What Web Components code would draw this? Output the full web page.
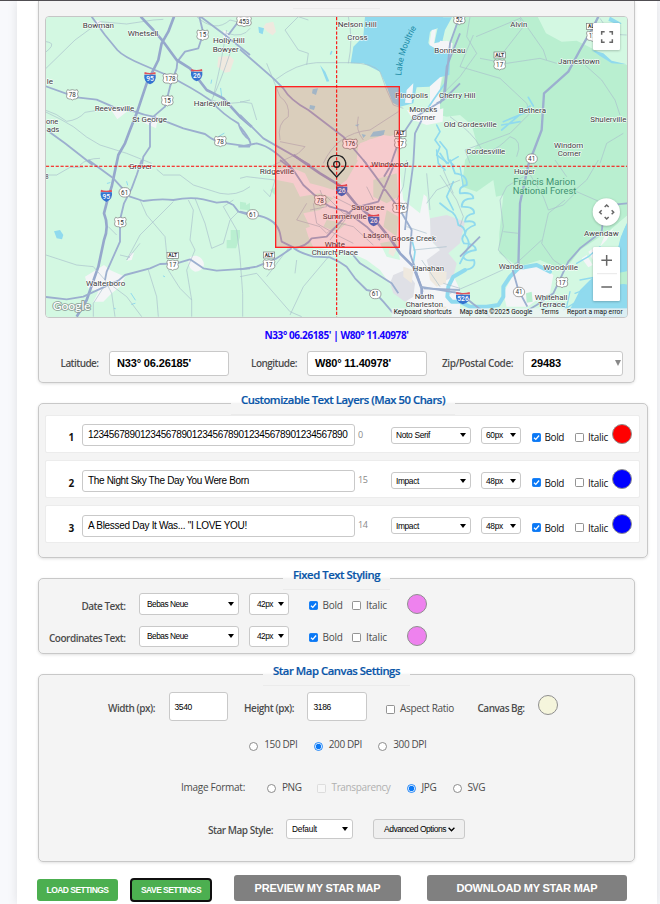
<!DOCTYPE html>
<html lang="en">
<head>
<meta charset="utf-8">
<title>Star Map Settings</title>
<style>
html,body{margin:0;height:904px;overflow:hidden}
body{background:#f8f9fc;font-family:"Open Sans",sans-serif;font-size:10px;color:#4c4c4c}
</style>
</head>
<body>
<star-app></star-app>
<script>
/* Text run whose letter spacing is tuned to fill a given width. */
class FitText extends HTMLElement{
  connectedCallback(){
    const r=this.attachShadow({mode:'open'});
    r.innerHTML=`<style>:host{display:block;flex:none;white-space:pre;width:${this.getAttribute('w')}px;line-height:14px}span{display:inline-block}</style><span></span>`;
    const s=r.querySelector('span');
    s.textContent=this.textContent;
    const w=+this.getAttribute('w'),n=s.textContent.length;
    const nat=s.getBoundingClientRect().width;
    if(nat) s.style.letterSpacing=((w-nat)/n).toFixed(3)+'px';
  }
}
/* White bordered box holding a value. */
class ValueBox extends HTMLElement{
  connectedCallback(){
    const a=n=>this.getAttribute(n);
    this.attachShadow({mode:'open'}).innerHTML=`<style>
    :host{display:flex;flex:none;box-sizing:border-box;align-items:center;width:${a('w')}px;height:${a('h')}px;padding:0 6px 0 ${a('pad')||6}px;background:#fff;border:1px solid #c9c9c9;border-radius:3px;color:#000;font-family:"Liberation Sans",sans-serif;font-size:${a('size')||9}px;justify-content:space-between;overflow:hidden}
    svg{flex:none;display:block;margin-right:${a('arrow')==='grey'?-5:-2}px}
    </style><slot></slot>${a('arrow')?`<svg width="6" height="${a('arrow')==='grey'?6:4}" viewBox="0 0 6 4" preserveAspectRatio="none"><path d="M0 0H6L3 4Z" fill="${a('arrow')==='grey'?'#888':'#000'}"/></svg>`:''}`;
  }
}
class TickBox extends HTMLElement{
  connectedCallback(){
    const on=this.hasAttribute('checked'),radio=this.hasAttribute('radio'),off=this.hasAttribute('disabled');
    const line=on?'#0a78f5':off?'#d8d8d8':'#808080';
    const g=radio
      ?`<circle cx="4.5" cy="4.5" r="4" fill="#fff" stroke="${line}" stroke-width=".9"/>${on?'<circle cx="4.5" cy="4.5" r="2.7" fill="#0a78f5"/>':''}`
      :`<rect x=".45" y=".45" width="8.1" height="8.1" rx="1.2" fill="${on?'#0a78f5':off?'#f7f7f7':'#fff'}" stroke="${line}" stroke-width=".9"/>${on?'<path d="M2 4.7L3.8 6.4L7.1 2.5" fill="none" stroke="#fff" stroke-width="1.3"/>':''}`;
    this.attachShadow({mode:'open'}).innerHTML=`<style>:host{display:block;flex:none;width:9px;height:9px}svg{display:block}</style><svg width="9" height="9">${g}</svg>`;
  }
}
class ColorDot extends HTMLElement{
  connectedCallback(){
    this.attachShadow({mode:'open'}).innerHTML=`<style>:host{display:block;flex:none;box-sizing:border-box;width:20px;height:20px;border:1px solid #8f8f8f;border-radius:50%;background:${this.getAttribute('color')}}</style>`;
  }
}
class PanelBox extends HTMLElement{
  connectedCallback(){
    const a=n=>this.getAttribute(n);
    this.attachShadow({mode:'open'}).innerHTML=`<style>
    :host{display:block}
    fieldset{margin:0;padding:0;box-sizing:border-box;min-width:0;width:${a('w')}px;height:${a('h')}px;border:1.5px solid #c8c8c8;border-radius:5px;background:#f4f4f4;box-shadow:0 1px 3px rgba(0,0,0,.12)}
    legend{box-sizing:border-box;margin:0 auto;padding:1px 10px 0;height:23px;border-bottom:1px solid #ebebeb;color:#0a56a8;font-weight:600;font-size:11.3px;-webkit-text-stroke:.2px #0a56a8}
    </style><fieldset><legend><fit-text w="${a('tw')}">${a('title')}</fit-text></legend><slot></slot></fieldset>`;
  }
}
class FormRow extends HTMLElement{
  connectedCallback(){
    this.attachShadow({mode:'open'}).innerHTML=`<style>:host{display:flex;align-items:center}</style><slot></slot>`;
  }
}
class TextLayer extends HTMLElement{
  connectedCallback(){
    const a=n=>this.getAttribute(n);
    this.attachShadow({mode:'open'}).innerHTML=`<style>
    :host{display:flex;align-items:center;box-sizing:border-box;width:595px;height:38px;padding-top:${a('n')==='1'?2:3}px;background:#fff;border:1px solid #ececec;border-radius:2px;color:#111}
    .n{font-weight:700;margin:4px 7px 0 22.5px}.c{color:#888;font-size:9px;margin:-1px 0 0 3.5px}
    </style>
    <fit-text class="n" w="6">${a('n')}</fit-text>
    <value-box w="273" h="22" size="10" pad="5.5"><fit-text w="${a('tw')}">${a('text')}</fit-text></value-box>
    <fit-text class="c" w="${a('count').length*4.7}">${a('count')}</fit-text>
    <value-box style="margin-left:${33-a('count').length*4.7}px" w="80" h="17" pad="4" size="8.4" arrow="black"><fit-text w="${a('fw')}">${a('font')}</fit-text></value-box>
    <value-box style="margin-left:10px" w="40" h="17" pad="4" size="8.4" arrow="black"><fit-text w="17">${a('size')}</fit-text></value-box>
    <tick-box checked style="margin:4px 0 0 11px"></tick-box><fit-text style="margin:4px 0 0 3.5px" w="19.5">Bold</fit-text>
    <tick-box style="margin:4px 0 0 11.5px"></tick-box><fit-text style="margin:4px 0 0 3.5px" w="20">Italic</fit-text>
    <color-dot style="margin:-3px 0 0 4px" color="${a('color')}"></color-dot>`;
  }
}
class PushButton extends HTMLElement{
  connectedCallback(){
    const a=n=>this.getAttribute(n),k=a('kind');
    this.attachShadow({mode:'open'}).innerHTML=`<style>
    :host{display:flex;flex:none;box-sizing:border-box;align-items:center;justify-content:center;width:${a('w')}px;height:${a('h')}px;border-radius:3px;font:bold ${a('size')}px "Liberation Sans",sans-serif;color:#fff;background:${k==='grey'?'#808080':'#4caf50'};${k==='focus'?'border:2px solid #101010;border-radius:4px':''}}
    </style><slot></slot>`;
  }
}

/* Map drawing. Units are thirds of a pixel; each tile group has its own origin. */
const T={A:[90,0],B:[720,0],C:[1320,0],D:[90,480],E:[720,480],F:[1320,480]};
const labels=[
['A','Bowman',158,252,84],['A','Whetsell',293,385,108],['A','Holly Hill',549,644,128],['A','Bowyer',548,626,156],['A','le',50,69,252],['A','Reevesville',194,313,332],['A','Harleyville',491,602,317],['A','St George',307,411,367],['A','one',48,85,372],['A','ads',50,88,396],
['B','Nelson Hill',293,410,80],['B','Cross',322,383,120],['B','Pinopolis',466,564,294],['B','Moncks',508,592,336],['B','Corner',515,586,360],['B','Windwood',394,505,500],
['C','Alvin',211,262,82],['C','Bonneau',-17,76,159],['C','Jamestown',354,479,192],['C','Cherry Hill',-3,106,293],['C','Bethera',236,318,339],['C','Old Cordesville',11,170,381],['C','Shulerville',451,559,365],['C','Cordesville',79,196,461],['C','Windom',342,430,445],['C','Corner',353,423,469],
['D','Grover',297,367,28],['D','Walterboro',168,286,377],['D','8',46,56,56],
['E','Ridgeville',59,162,43],['E','Sangaree',334,433,150],['E','Summerville',248,380,178],['E','Ladson',370,447,235],['E','White',254,315,262],['E','Church Place',215,354,286],['E','Goose Creek',454,588,244],['E','Hanahan',518,612,332],['E','North',524,582,416],['E','Charleston',497,609,440],
['F','Huger',222,285,43],['F','Awendaw',432,536,228],['F','Wando',176,250,327],['F','Woodville',310,414,331],['F','Whitehall',284,382,419],['F','Terrace',294,376,442]];
const shields=[['A','15',518,105],['A','453',642,64],['A','178',421,236],['A','78',127,284],['A','15',412,302],['A','78',571,424],['B','176',330,432],['B','17',481,430,1],['C','52',58,58],['C','17',179,194,1],['C','17',457,108,1],['C','41',275,476,0,1],['D','61',284,97,0,1],['D','15',271,187],['D','17',428,315,1],['E','61',38,163,0,1],['E','78',241,121],['E','176',480,144],['E','17',87,314,1],['E','61',406,402,0,1],['F','17',366,367],['F','41',237,396,0,1]];
const inter=[['A','95',360,234],['A','26',500,225],['D','95',229,107],['E','26',305,90],['E','26',401,180],['F','526',69,414]];
const g=(t,s)=>`<g transform="translate(${T[t]})">${s}</g>`;
const tx=([t,s,x,x2,y],c='')=>g(t,`<text class="l ${c}" x="${x}" y="${y}" textLength="${x2-x}" lengthAdjust="spacingAndGlyphs">${s}</text>`);
const sh=([t,s,x,y,alt,round])=>{const w=s.length>2?44:35;return g(t,`<g transform="translate(${x} ${y})">${round?`<rect x="-17" y="-14" width="34" height="28" rx="14"/>`:`<path d="M${-w/2+3} -15Q${-w/4} -11 0 -15Q${w/4} -11 ${w/2-3} -15L${w/2} -9Q${w/2-4} -2 ${w/2} 5Q${w/2-1} 13 ${w/2-8} 13Q5 12 0 16Q-5 12 ${-w/2+8} 13Q${-w/2+1} 13 ${-w/2} 5Q${-w/2+4} -2 ${-w/2} -9Z"/>`}<text class="s" y="7">${s}</text>${alt?'<rect x="-17" y="-38" width="34" height="18"/><text class="s" y="-24" style="font-size:15px;font-weight:700">ALT</text>':''}</g>`)};
const it=([t,s,x,y])=>{const w=s.length>2?21:17;return g(t,`<g transform="translate(${x} ${y})"><path d="M${-w} -10H${w}Q${w+3} 11 0 19Q${-w-3} 11 ${-w} -10Z" style="fill:#3473d0;stroke:none"/><path d="M${-w+1} -18Q0 -12 ${w-1} -18L${w} -11H${-w}Z" style="fill:#e0525c;stroke:none"/><text class="s" y="9" style="fill:#fff;font-weight:500;font-size:20px">${s}</text></g>`)};

class StarMap extends HTMLElement{
  connectedCallback(){
    this.attachShadow({mode:'open'}).innerHTML=`<style>
    :host{display:block;box-sizing:border-box;width:583px;height:302px;border:1px solid #c6c6c6;border-radius:4px;overflow:hidden}
    svg{display:block}
    .l{font:400 24px Roboto,sans-serif;fill:#3c3c42;stroke:#fff;stroke-width:4px;stroke-opacity:.8;paint-order:stroke;stroke-linejoin:round}
    .park{fill:#3f9270;font-size:27px;stroke:#baf0d0}
    .lake{fill:#1c8ba5;stroke:none;font-size:26px}
    .sh path,.sh rect{fill:#fff;stroke:#777;stroke-width:2}
    .s{font:400 19px Roboto,sans-serif;fill:#333;text-anchor:middle}
    .r path{fill:none;stroke:#9cafcf;stroke-width:5.5;stroke-linejoin:round}
    .r .i{stroke-width:8;stroke:#96a8cc}.r .m{stroke-width:2;stroke:#a9c0cc}
    .f{fill:#b9efd0}.w{fill:#90daee}.u{fill:#f4f5f7}.lg{fill:#d3f8e2}
    .ln{fill:none;stroke:#90daee;stroke-linejoin:round;stroke-linecap:round}
    .att{font:400 19px Roboto,sans-serif;fill:#111}
    </style>
    <svg width="581" height="300" viewBox="138 51 1743 900">
    <rect x="138" y="51" width="1743" height="900" fill="#d3f8e2"/>
    ${g('C',`<path class="f" d="M55 40L20 190L-10 300L-25 340L20 350L60 345L95 375L112 435L75 480L66 560L110 575L160 540L168 590L190 585L178 700L178 760L235 800L300 780L350 802L390 790L420 750L510 690L570 640V40Z"/>
      <path class="lg" d="M288 40L318 100L365 125L410 122L470 152L500 180L565 196V40Z"/>
      <path class="f" d="M500 815L570 800V865L540 900L490 870Z"/>
      <path class="w" d="M510 50L545 70L535 75L505 62ZM455 150L490 160L515 182L560 193L515 190L480 168Z"/>
      <path class="w" d="M0 52H36L15 90L8 120L0 200L-30 190Z"/>
      <path class="ln" stroke-width="5" d="M265 292L280 318M185 390L270 318M190 365L255 338M185 375L240 365M0 425L20 450L25 480L40 495M0 460L20 490"/>
      <path class="u" d="M0 122L30 125V165L12 190L0 260V330L-30 350V220Z"/>`)}
    ${g('B',`<path class="w" d="M375 50H610L598 82L570 95L565 130L590 148L632 150L628 225L600 232L568 260L530 262L520 310L480 320L458 308L440 260L420 215L370 190L332 190L340 140L370 110Z"/>
      <path class="u" d="M575 90L588 88L582 130L620 122L638 130L635 158L600 160L585 145L568 135ZM520 250L515 310L495 308L500 270ZM500 330L560 340L610 325L608 365L560 375L520 360Z"/>
      <path class="w" d="M55 80L72 85L68 103L57 98ZM240 195L256 215L268 244L260 245ZM218 268L234 265L228 285L216 280ZM210 315L226 318L222 330L208 326ZM365 402L378 405L370 414ZM400 395L435 390L430 408L390 410ZM345 375L358 372L352 380Z"/>
      <path fill="#efe9df" d="M78 70L100 65L108 95L98 106L82 95L70 82Z"/>
      <path class="ln" stroke-width="5" d="M590 375L600 395L585 420L600 440L590 465L625 490M560 330L580 300L615 250M275 155L272 162"/>
      <path class="u" d="M355 435L390 418L440 412L462 405L470 440L452 460L455 490L400 500L350 480Z"/>`)}
    ${g('A',`<path fill="#efe9df" d="M565 170L600 168L612 180L600 215L585 218L562 200Z"/><path class="u" d="M190 60L212 62L220 85L200 85ZM240 325L290 335L262 358ZM350 350L385 348L378 385L345 370ZM580 90L600 100L595 125L580 115Z"/><path class="ln" stroke-width="3" d="M572 265L575 290M545 240L543 250M565 410L582 400"/>`)}
    ${g('D',`<path class="u" d="M165 350L222 315L240 330L285 350L270 380L245 400L220 425L190 425L205 395L175 385ZM300 280L312 278L305 300L290 302ZM475 300Q480 286 500 287Q522 295 522 315Q515 335 495 335Q475 328 475 300Z"/><path class="w" d="M72 214L90 210L100 225L96 238L80 235Z"/><path class="f" d="M602 210H630V232L618 265H590V240H602ZM640 140L660 128V160Z"/><path class="ln" stroke-width="3" d="M290 65L293 75M232 70L240 68M303 400L316 420M253 445L256 446M400 348L404 350M305 433L315 430"/>`)}
    ${g('E',`<path class="u" d="M210 70L250 80L280 90L320 60L355 0L360 -50L430 -75L465 -70L480 40L560 110L580 250L610 280L660 390V475H570L520 440L470 400L420 330L380 300L335 280L220 262L205 230L180 150L150 120L110 70L108 30L150 20L195 40Z"/>
      <path fill="#d3f8e2" d="M110 60L160 70L180 110L240 100L280 115L240 150L190 160L210 200L150 220L110 190ZM400 60L470 40L475 110L440 130L400 110ZM440 150L475 170L470 230L430 200ZM260 180L320 190L290 215L250 200ZM480 40L520 -10L560 60L540 160L490 120ZM420 250L470 240L480 300L440 290Z"/>
      <path fill="#dfe0e6" d="M570 175L620 165L675 185L660 250L625 280L650 310L640 350L600 370L575 350L560 300L600 270L572 240ZM460 345L495 330L525 370L520 410L495 425L460 400L450 370Z"/>
      <path fill="#efe9df" d="M490 320L520 330L515 370L490 350ZM565 330L620 335L618 370L590 380L570 360ZM450 260L470 268L460 290L445 280ZM590 435L620 440L610 460L585 450Z"/>
      <path class="ln" stroke-width="5" d="M515 238L525 275L520 310L530 335M585 455L560 470M590 -30L595 10L615 30M640 65L620 110L640 150"/>
      <path class="f" d="M0 125L18 128L20 150L0 148ZM90 90L108 80V108Z"/>`)}
    ${g('F',`<path class="w" d="M570 170L545 220L535 260L500 280L490 330L450 360L420 390L395 440L390 480H570V375L540 370V345L570 330Z"/><path class="lg" d="M395 340L430 310L480 250L540 185L570 160L545 225L525 255L520 360L460 340L420 375L390 435L340 470L300 470L350 410Z"/>
      <path class="f" d="M530 340L570 332V368L530 375Z"/>
      <path class="u" d="M220 345L240 325L300 318L340 345L330 400L290 420L262 440L200 440L190 400ZM425 295L440 285L458 315L445 322ZM445 275L460 265L470 300L462 305ZM495 225L520 205L500 240L480 260Z"/>
      <path class="f" d="M258 400L275 395L278 425L260 428Z"/>
      <path class="ln" stroke-width="12" d="M75 330L40 350L25 380L22 410L35 425L60 425L90 440L140 440L175 435L190 410L190 380L210 350L235 325L290 315L330 335"/>
      <path class="ln" stroke-width="5.5" d="M75 330Q110 325 102 300Q75 305 70 290Q75 275 108 270Q105 250 72 250Q60 235 75 220Q75 200 55 195Q50 160 25 150L0 130M30 0L45 40Q85 45 80 75Q55 80 60 100Q100 95 100 115Q65 115 65 140Q105 140 102 160Q75 165 75 185Q105 180 105 195Q75 205 75 225Q95 250 80 270L60 310"/>
      <path class="ln" stroke-width="4" d="M300 450L350 430L390 450L430 390L480 350M370 450L410 425L450 430M480 260L445 290L410 310M60 20L70 80M55 -10L20 10M390 395L380 440M420 360L500 345M405 400L470 375"/>`)}
    <g class="r">
    ${g('A',`<path class="m" d="M-45 120Q60 120 65 132T20 175M45 208L135 120L210 65L290 72L370 60L400 58M45 330Q80 340 110 364Q145 360 165 337L240 325M45 335Q90 355 130 380Q170 415 210 435L290 460L365 490M500 50Q555 100 600 60L660 75M590 90L570 200L550 290M600 160Q570 250 545 300Q595 320 660 300M590 100Q640 115 660 85M150 495Q170 475 210 475"/>
    <path d="M185 50L225 105L262 150Q280 170 340 195L410 225Q490 265 540 300Q580 345 625 370Q635 405 660 420M45 258L140 292L200 299L260 325L315 335Q340 345 370 350L460 385L525 402Q560 430 590 430L660 440M508 50L520 100L505 145L465 155L442 185L440 205L420 260L405 320L370 350L360 370V440L340 470L335 500M512 50Q585 105 585 105L660 165M595 105L625 65M50 390L105 430L150 465L188 495"/>
    <path class="i" d="M332 50L370 90L400 125L440 180L480 205L530 270L580 295L630 350L665 380M432 50L415 95L395 130L385 180L350 250L335 295L320 340L300 390L285 430L265 465L245 560L235 590L222 640Q238 680 222 720L205 800L170 900L140 950"/>`)}
    ${g('B',`<path class="m" d="M105 240Q170 190 230 188H330Q400 190 420 215L440 270L460 315L490 325M205 60L175 50L135 90L175 150L205 160L200 195M325 50Q340 120 325 190M120 425L195 440L175 460L90 500M120 420Q110 370 145 350Q150 310 120 290L100 240L80 190M0 305L35 310L50 360M250 490Q290 400 390 390L475 335M355 350Q345 390 370 420"/>
    <path d="M0 148L100 235L130 265Q150 300 205 330L310 410L380 492M0 345L70 415L210 495M0 380Q50 440 20 440T0 440M660 250L610 300L520 355L480 415L460 470L450 500L432 530M545 360L525 400L520 490L500 640L495 690M0 440L50 430Q100 440 160 510M590 310L610 300L620 200L660 100"/>`)}
    ${g('C',`<path class="m" d="M90 50L80 110L110 160L60 230L0 290M108 110L240 55L250 80L180 170M100 105L60 200L180 235L260 310L270 340L210 400L75 450L90 490M120 175L200 190L300 175L350 190M435 195L485 240L525 300L540 345M550 400L500 430L480 490M30 350Q100 400 120 440T210 410Q250 420 230 470M240 50L310 150L320 180M480 55Q510 110 560 105"/>
    <path style="stroke-width:7" d="M475 50L460 80L420 150L385 215L312 280L305 390L265 495L240 610L235 800"/><path d="M55 60L30 130L15 280L0 310"/>`)}
    ${g('D',`<path class="m" d="M45 45H80L120 22H160M380 28L400 45H450L490 75L570 100Q620 110 660 80M235 200L260 225M48 285L140 315L190 320L225 360M330 120L350 165L405 230L410 280M430 125L330 225L290 300L330 250M475 120L490 150L480 240L495 270L470 330L485 420V470M495 115L525 190L545 265L580 250L600 180L625 155M610 120L580 140L620 210L630 290L638 400V470M355 330L380 410L385 470M415 330Q440 370 450 385L485 420M270 285L300 292M225 360L245 400L255 470M250 380L290 410L335 470M190 470L190 430L225 375"/>
    <path d="M175 0L250 55L300 110L340 123Q390 115 430 120Q480 110 520 118L560 128L590 125L610 135L625 155L660 165M335 0L320 45L305 85L282 130L270 180V245L230 335L225 360M40 410L110 418L160 410L225 380L265 362L285 345L360 325L390 312L440 310L480 298L520 325L560 332L660 325"/>`)}
    ${g('E',`<path class="m" d="M0 55L20 50L105 60L90 110L70 90M170 300L165 340M270 285L190 380L150 465M0 350L50 340L150 455L185 470M145 265L80 350M200 130L170 180L240 200L260 220L300 190L340 200L400 255M240 90L260 140L210 150M280 110L360 150M380 80L400 120M500 0L490 80L470 120M560 40L570 150M500 200L560 220M520 270L620 260M545 300L600 380M660 385L610 370M560 130L590 90L660 60M610 30L640 100M220 130L230 190L300 230L340 250M260 110L310 160L420 180M270 240L330 160"/>
    <path d="M0 155L60 168Q110 180 120 220L125 245L160 262Q170 275 220 290L270 292Q300 305 320 320L345 355L380 390Q400 390 430 425L460 460M0 328L50 320L110 295L155 265M160 265Q200 260 215 235L260 230L320 165L345 143L415 125L460 20M120 0L160 30L190 75L240 120L270 140L320 155L380 200L420 240M370 0L400 40L480 150L515 210L510 280L530 340L548 395M335 280L360 310L455 370L475 400M550 385L660 390M720 230L660 290"/>
    <path class="i" d="M160 -15L240 40L305 80L350 135L405 180L450 235L480 280L520 320L545 385V415"/>`)}
    ${g('F',`<path class="m" d="M0 45L50 120L70 170L60 200M250 50L200 80L180 120L190 200L175 270L220 320M190 215L235 220M265 35L310 110L325 150L370 135L410 95L490 130M375 120L325 160L305 250L340 300L370 320M305 240L240 300L220 315L100 370L30 400M475 0L440 60L400 95M345 0L380 50"/>
    <path d="M488 190L485 215L420 265L385 305L340 400L290 435L265 450M218 330L235 390L262 440M-60 380L60 400L100 432L150 470M530 133L565 130"/>`)}
    </g>
    <g class="sh">${shields.map(sh).join('')}${inter.map(it).join('')}</g>
    ${labels.map(l=>tx(l)).join('')}
    ${tx(['F','Francis Marion',220,406,75],'park')}${tx(['F','National Forest',218,409,103],'park')}
    ${g('B','<path id="lk" d="M484 227Q488 150 533 78" fill="none"/><text class="lake" style="font-family:Roboto,sans-serif"><textPath href="#lk" textLength="152" lengthAdjust="spacingAndGlyphs">Lake Moultrie</textPath></text>')}
    <g><rect x="827" y="260" width="371" height="482" fill="#f00" fill-opacity=".17" stroke="#f22" stroke-width="4"/></g>
    ${g('D','<text x="68" y="451" textLength="114" lengthAdjust="spacingAndGlyphs" style="font:500 32px Lato,sans-serif;fill:#fff;stroke:#8c9f98;stroke-width:5px;paint-order:stroke">Google</text>')}
    <rect x="1175" y="925" width="706" height="26" fill="#f0f4f5" fill-opacity=".78"/>
    ${[['Keyboard shortcuts',461,635],['Map data ©2025 Google',659,877],['Terms',903,956],['Report a map error',981,1148]].map(([s,a,b])=>g('E',`<text class="att" x="${a}" y="462" textLength="${b-a}" lengthAdjust="spacingAndGlyphs">${s}</text>`)).join('')}
    <path d="M138 499H1881M1010 51V951" fill="none" stroke="#f00" stroke-width="3.2" stroke-dasharray="9.5 5"/>
    ${g('B','<path d="M290 531L268 507Q260 494 264 484Q270 466 290 466Q310 466 316 484Q320 494 312 507Z" fill="none" stroke="#222" stroke-width="4"/><circle cx="290" cy="493" r="9" fill="none" stroke="#222" stroke-width="4"/>')}
    ${g('C','<g filter="drop-shadow(0 2px 3px #0004)"><rect x="459" y="69" width="81" height="81" rx="4" fill="#fff"/><circle cx="499" cy="636" r="41" fill="#fff"/><rect x="459" y="741" width="81" height="162" rx="4" fill="#fff"/></g><path d="M494 95H485V104M508 95H517V104M494 127H485V118M508 127H517V118M484 781H516M500 765V797M484 861H516" fill="none" stroke="#666" stroke-width="4.5"/><path d="M471 821H531" stroke="#ddd" stroke-width="2"/><path d="M494 621L500 615L506 621M494 651L500 657L506 651M485 631L479 637L485 643M515 631L521 637L515 643" fill="none" stroke="#666" stroke-width="4.5"/>')}
    </svg>`;
  }
}
class StarApp extends HTMLElement{
  connectedCallback(){
    const fixed=(label,w,mt,h)=>`<form-row style="margin-top:${mt}px;height:22px">
      <fit-text class="b" style="margin:3px 0 0 ${86.5-w}px" w="${w}">${label}</fit-text>
      <value-box style="margin-left:13.5px" w="100" h="${h}" pad="7" size="8.3" arrow="black"><fit-text w="41">Bebas Neue</fit-text></value-box>
      <value-box style="margin-left:10px" w="40" h="${h}" pad="7" size="8.3" arrow="black"><fit-text w="16">42px</fit-text></value-box>
      <tick-box checked style="margin:2px 0 0 19.5px"></tick-box><fit-text style="margin:2px 0 0 5px" w="20">Bold</fit-text>
      <tick-box style="margin:2px 0 0 9.5px"></tick-box><fit-text style="margin:2px 0 0 5px" w="21">Italic</fit-text>
      <color-dot color="violet" style="margin-left:20px"></color-dot></form-row>`;
    this.attachShadow({mode:'open'}).innerHTML=`<style>
    :host{display:block;height:904px;overflow:hidden;border-top:1px solid #504e52;box-sizing:border-box}
    main{box-sizing:border-box;margin-left:17px;width:640px;height:903px;background:#fff;box-shadow:0 0 10px rgba(0,0,0,.1);padding-left:21px;overflow:visible}
    .map{box-sizing:border-box;width:597px;height:382px;border:1.5px solid #c8c8c8;border-top:0;border-radius:0 0 5px 5px;background:#f4f4f4;box-shadow:0 1px 3px rgba(0,0,0,.12);padding:7px 0 0 6px}
    .rule{width:87px;height:1px;background:#ebebeb;margin:0 0 7px 248px}
    .b{font-weight:600}
    .geo{font-weight:700;font-size:10px;color:#1500ff;margin:10px 0 0 219.5px}
    .v{font-weight:700}
    </style><main>
    <section class="map"><div class="rule"></div><star-map></star-map>
      <fit-text class="geo" w="144">N33° 06.26185' | W80° 11.40978'</fit-text>
      <form-row style="margin-top:8.5px;height:25px">
        <fit-text class="b" style="margin-left:15.5px" w="38">Latitude:</fit-text>
        <value-box class="v" style="margin-left:10.5px" w="120" h="25" pad="7" size="11"><fit-text w="74">N33° 06.26185'</fit-text></value-box>
        <fit-text class="b" style="margin-left:22px" w="46">Longitude:</fit-text>
        <value-box class="v" style="margin-left:10px" w="120" h="25" pad="7" size="11"><fit-text w="76">W80° 11.40978'</fit-text></value-box>
        <fit-text class="b" style="margin-left:15px" w="71">Zip/Postal Code:</fit-text>
        <value-box class="v" style="margin-left:10px" w="100" h="25" pad="7" size="11" arrow="grey"><fit-text w="30">29483</fit-text></value-box>
      </form-row>
    </section>
    <panel-box style="margin-top:9px" w="610" h="166" tw="204" title="Customizable Text Layers (Max 50 Chars)">
      <text-layer style="margin-left:6px" n="1" text="12345678901234567890123456789012345678901234567890" tw="259.5" count="0" font="Noto Serif" fw="34" size="60px" color="#f00"></text-layer>
      <text-layer style="margin:7px 0 0 6px" n="2" text="The Night Sky The Day You Were Born" tw="161" count="15" font="Impact" fw="23" size="48px" color="#00f"></text-layer>
      <text-layer style="margin:7px 0 0 6px" n="3" text='A Blessed Day It Was... &amp;quot;I LOVE YOU!' tw="159" count="14" font="Impact" fw="23" size="48px" color="#00f"></text-layer>
    </panel-box>
    <panel-box style="margin-top:9px" w="597" h="87" tw="87" title="Fixed Text Styling">${fixed('Date Text:',44,3,22)}${fixed('Coordinates Text:',76.5,10,21)}</panel-box>
    <panel-box style="margin-top:9px" w="597" h="199" tw="127" title="Star Map Canvas Settings">
      <form-row style="margin-top:6px;height:29px">
        <fit-text class="b" style="margin:2px 0 0 69px" w="47">Width (px):</fit-text>
        <value-box style="margin-left:13.5px" w="59.5" h="29" pad="5" size="8.5"><fit-text w="17.5">3540</fit-text></value-box>
        <fit-text class="b" style="margin:2px 0 0 16px" w="50">Height (px):</fit-text>
        <value-box style="margin-left:12.5px" w="60" h="29" pad="6" size="8.5"><fit-text w="17.5">3186</fit-text></value-box>
        <tick-box style="margin:6px 0 0 19px"></tick-box><fit-text style="margin:2px 0 0 5.5px" w="54">Aspect Ratio</fit-text>
        <fit-text class="b" style="margin:2px 0 0 23.5px" w="47">Canvas Bg:</fit-text>
        <color-dot color="beige" style="margin:-3px 0 0 13.5px"></color-dot>
      </form-row>
      <form-row style="margin:15.5px 0 0 210.3px;height:14px">
        <tick-box radio style="margin-top:5px"></tick-box><fit-text style="margin-left:6px" w="33">150 DPI</fit-text>
        <tick-box radio checked style="margin:5px 0 0 16.5px"></tick-box><fit-text style="margin-left:6px" w="33">200 DPI</fit-text>
        <tick-box radio style="margin:5px 0 0 16.5px"></tick-box><fit-text style="margin-left:6px" w="33">300 DPI</fit-text>
      </form-row>
      <form-row style="margin:29.5px 0 0 142px;height:14px">
        <fit-text w="64">Image Format:</fit-text><tick-box radio style="margin:3px 0 0 22px"></tick-box><fit-text style="margin-left:6px" w="19.5">PNG</fit-text>
        <tick-box disabled style="margin:2px 0 0 15px"></tick-box><fit-text style="margin-left:6px;color:#b0b0b0" w="59">Transparency</fit-text>
        <tick-box radio checked style="margin:3px 0 0 16px"></tick-box><fit-text style="margin-left:6px" w="15">JPG</fit-text>
        <tick-box radio style="margin:3px 0 0 16px"></tick-box><fit-text style="margin-left:6px" w="17.5">SVG</fit-text>
      </form-row>
      <form-row style="margin:25px 0 0 169px;height:20px">
        <fit-text class="b" style="margin-top:2px" w="65">Star Map Style:</fit-text>
        <value-box style="margin-left:13px" w="67" h="20" size="8.3" arrow="black" pad="5"><fit-text w="25">Default</fit-text></value-box>
        <value-box style="margin-left:20px;background:#efefef" w="92" h="20" size="8.5" pad="10"><fit-text w="62">Advanced Options</fit-text><svg width="7" height="5" style="margin-right:3px;flex:none"><path d="M.6.8L3.5 3.8L6.4.8" fill="none" stroke="#000" stroke-width="1.3"/></svg></value-box>
      </form-row>
    </panel-box>
    <form-row style="margin:13px 0 0 -1px;height:28px">
      <push-button w="81" h="22" size="8.5" style="margin-top:2px"><fit-text w="62">LOAD SETTINGS</fit-text></push-button>
      <push-button kind="focus" w="82" h="24" size="8.5" style="margin:2px 0 0 12px"><fit-text w="60">SAVE SETTINGS</fit-text></push-button>
      <push-button kind="grey" w="167" h="26" size="11" style="margin:-2px 0 0 22px"><fit-text w="126">PREVIEW MY STAR MAP</fit-text></push-button>
      <push-button kind="grey" w="200" h="26" size="11" style="margin:-2px 0 0 26px"><fit-text w="141">DOWNLOAD MY STAR MAP</fit-text></push-button>
    </form-row>
    </main>`;
  }
}
[['fit-text',FitText],['value-box',ValueBox],['tick-box',TickBox],['color-dot',ColorDot],['panel-box',PanelBox],['form-row',FormRow],['text-layer',TextLayer],['push-button',PushButton],['star-map',StarMap],['star-app',StarApp]].forEach(([n,c])=>customElements.define(n,c));
</script>
</body>
</html>
